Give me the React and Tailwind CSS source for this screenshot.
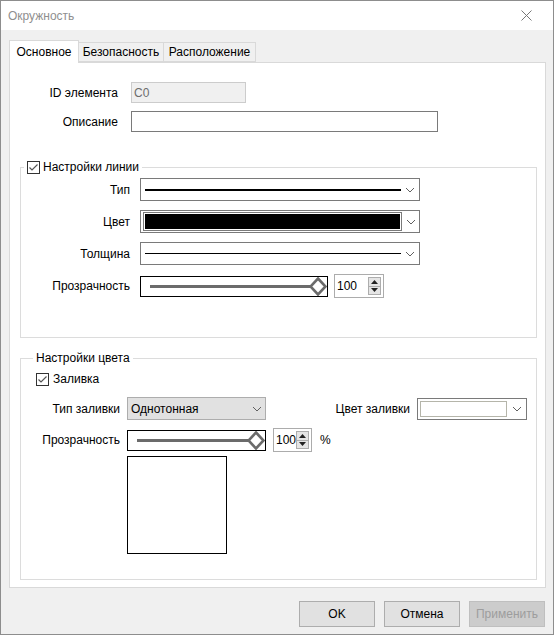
import React from 'react';

const font = { fontFamily: '"Liberation Sans", Arial, sans-serif' };

// small helpers for the WinForms look
const Chevron = ({ color = '#606060' }) => (
  <svg width="10" height="6" viewBox="0 0 10 6" className="shrink-0">
    <path d="M1 1 L5 5 L9 1" fill="none" stroke={color} strokeWidth="1" />
  </svg>
);

const CheckBox = () => (
  <svg width="13" height="13" viewBox="0 0 13 13" className="shrink-0">
    <rect x="0.5" y="0.5" width="12" height="12" fill="#fff" stroke="#333" />
    <path d="M2.5 6.5 L5 9 L10.5 3.5" fill="none" stroke="#555" strokeWidth="1.2" />
  </svg>
);

const Slider = ({ width }) => (
  <div className="relative h-[21px] border border-black bg-white shrink-0" style={{ width }}>
    <div className="absolute left-[9px] right-[10px] top-[8px] h-[3px] bg-[#6b6b6b]" />
    <svg width="18" height="19" viewBox="0 0 18 19" className="absolute right-[0px] top-[0px]">
      <polygon points="9,1.5 16.5,9.5 9,17.5 1.5,9.5" fill="#fff" stroke="#6b6b6b" strokeWidth="2.6" />
    </svg>
  </div>
);

const Spinner = ({ width }) => (
  <div className="flex items-center h-[24px] border border-[#acacac] bg-white shrink-0 pl-[2px] pr-[2px]" style={{ width }}>
    <span className="flex-1 text-[12px] text-black leading-none">100</span>
    <div className="flex flex-col w-[13px] h-[18px] border border-[#adadad] bg-[#e5e5e5]">
      <div className="flex-1 flex items-center justify-center border-b border-[#adadad]">
        <svg width="7" height="4" viewBox="0 0 7 4"><polygon points="3.5,0 7,4 0,4" fill="#222" /></svg>
      </div>
      <div className="flex-1 flex items-center justify-center">
        <svg width="7" height="4" viewBox="0 0 7 4"><polygon points="0,0 7,0 3.5,4" fill="#222" /></svg>
      </div>
    </div>
  </div>
);

const LineCombo = ({ children }) => (
  <div className="flex items-center w-[280px] h-[23px] border border-[#7a7a7a] bg-white shrink-0">
    <div className="flex-1 flex items-center h-full pl-[4px]">{children}</div>
    <div className="w-[18px] flex justify-center pr-[1px]"><Chevron /></div>
  </div>
);

const Button = ({ children, disabled }) => (
  <button
    className={`w-[76px] h-[26px] text-[12px] border ${
      disabled ? 'bg-[#cccccc] border-[#bfbfbf] text-[#9d9d9d]' : 'bg-[#e1e1e1] border-[#adadad] text-black'
    }`}
  >
    {children}
  </button>
);

export default function App() {
  return (
    <div className="w-[554px] h-[635px] border border-[#8d8d8d] bg-[#f0f0f0] flex flex-col text-[12px] text-black" style={font}>
      {/* Title bar */}
      <div className="h-[29px] bg-white flex items-center justify-between pl-[7px] pr-[21px] shrink-0">
        <span className="text-[12px] text-[#8f8f8f]">Окружность</span>
        <svg width="11" height="11" viewBox="0 0 11 11">
          <path d="M0.5 0.5 L10.5 10.5 M10.5 0.5 L0.5 10.5" stroke="#777" strokeWidth="1" />
        </svg>
      </div>

      {/* Tabs */}
      <div className="flex items-end ml-[8px] mt-[10px] h-[22px] relative z-10">
        <div className="w-[70px] h-[23px] bg-white border border-b-0 border-[#d9d9d9] flex items-center justify-center -mb-[1px]">
          Основное
        </div>
        <div className="w-[85px] h-[20px] border border-l-0 border-[#d9d9d9] flex items-center justify-center">
          Безопасность
        </div>
        <div className="w-[92px] h-[20px] border border-l-0 border-[#d9d9d9] flex items-center justify-center">
          Расположение
        </div>
      </div>

      {/* Tab panel */}
      <div className="ml-[8px] w-[537px] h-[526px] bg-white border border-[#d9d9d9] flex flex-col pt-[19px]">
        <div className="flex items-center">
          <div className="w-[108px] text-right">ID элемента</div>
          <div className="ml-[13px] w-[115px] h-[21px] border border-[#cccccc] bg-[#f0f0f0] flex items-center pl-[2px] text-[#6d6d6d]">C0</div>
        </div>
        <div className="flex items-center mt-[8px]">
          <div className="w-[108px] text-right">Описание</div>
          <div className="ml-[13px] w-[307px] h-[21px] border border-[#7a7a7a] bg-white" />
        </div>

        {/* Line settings */}
        <fieldset className="ml-[10px] w-[517px] mt-[27px] border border-[#dcdcdc] pb-[39px] pt-[3px]">
          <legend className="ml-[3px] px-[3px] flex items-center gap-[3px] h-[16px]">
            <CheckBox />
            <span>Настройки линии</span>
          </legend>
          <div className="flex items-center">
            <div className="w-[109px] text-right">Тип</div>
            <div className="ml-[10px]">
              <LineCombo><div className="w-[256px] h-[2px] bg-black" /></LineCombo>
            </div>
          </div>
          <div className="flex items-center mt-[9px]">
            <div className="w-[109px] text-right">Цвет</div>
            <div className="ml-[10px] flex items-center w-[280px] h-[23px] border border-[#7a7a7a] bg-white">
              <div className="ml-[2px] w-[259px] h-[19px] border border-[#7a7a7a] p-[1px] bg-white">
                <div className="w-full h-full bg-black" />
              </div>
              <div className="flex-1 flex justify-center"><Chevron /></div>
            </div>
          </div>
          <div className="flex items-center mt-[9px]">
            <div className="w-[109px] text-right">Толщина</div>
            <div className="ml-[10px]">
              <LineCombo><div className="w-[256px] h-[1px] bg-black" /></LineCombo>
            </div>
          </div>
          <div className="flex items-center mt-[9px]">
            <div className="w-[109px] text-right">Прозрачность</div>
            <div className="ml-[10px]"><Slider width={188} /></div>
            <div className="ml-[6px]"><Spinner width={50} /></div>
          </div>
        </fieldset>

        {/* Color settings */}
        <fieldset className="ml-[10px] w-[517px] mt-[12px] border border-[#dcdcdc] pb-[25px] pt-[5px]">
          <legend className="ml-[12px] px-[3px] h-[16px] flex items-center">Настройки цвета</legend>
          <div className="flex items-center gap-[4px] pl-[15px] h-[16px]">
            <CheckBox />
            <span>Заливка</span>
          </div>
          <div className="flex items-center mt-[10px] pr-[9px]">
            <div className="w-[99px] text-right">Тип заливки</div>
            <div className="ml-[7px] flex items-center w-[139px] h-[23px] border border-[#adadad] bg-[#e1e1e1] pl-[3px]">
              <span className="flex-1">Однотонная</span>
              <div className="w-[17px] flex justify-center"><Chevron /></div>
            </div>
            <div className="flex-1" />
            <div>Цвет заливки</div>
            <div className="ml-[7px] flex items-center w-[110px] h-[22px] border border-[#7a7a7a] bg-white">
              <div className="ml-[2px] w-[87px] h-[16px] border border-[#b5b5aa] bg-white" />
              <div className="flex-1 flex justify-center"><Chevron /></div>
            </div>
          </div>
          <div className="flex items-center mt-[8px]">
            <div className="w-[99px] text-right">Прозрачность</div>
            <div className="ml-[7px]"><Slider width={139} /></div>
            <div className="ml-[7px]"><Spinner width={39} /></div>
            <div className="ml-[8px]">%</div>
          </div>
          <div className="ml-[106px] mt-[4px] w-[100px] h-[98px] border border-black bg-white" />
        </fieldset>
      </div>

      {/* Buttons */}
      <div className="flex justify-end gap-[9px] mt-[13px] pr-[8px]">
        <Button>OK</Button>
        <Button>Отмена</Button>
        <Button disabled>Применить</Button>
      </div>
    </div>
  );
}
